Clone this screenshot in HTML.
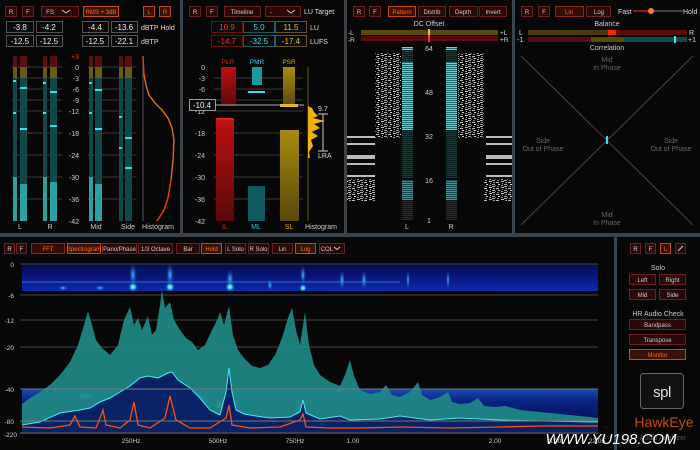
<!DOCTYPE html>
<html><head><meta charset="utf-8"><style>
html,body{margin:0;padding:0;background:#070708;width:700px;height:450px;overflow:hidden}
svg{display:block;font-family:"Liberation Sans",sans-serif}
</style></head><body>
<svg width="700" height="450" viewBox="0 0 700 450" xmlns="http://www.w3.org/2000/svg">
<defs>
<pattern id="stripe" width="4" height="2" patternUnits="userSpaceOnUse"><rect width="4" height="1" fill="#000" opacity="0.55"/></pattern>
<pattern id="noise" width="12" height="6" patternUnits="userSpaceOnUse">
<rect x="0" y="0" width="3" height="1" fill="#ddd"/><rect x="5" y="0" width="2" height="1" fill="#aaa"/><rect x="9" y="1" width="3" height="1" fill="#eee"/>
<rect x="1" y="2" width="2" height="1" fill="#bbb"/><rect x="4" y="2" width="3" height="1" fill="#eee"/><rect x="10" y="3" width="1" height="1" fill="#ccc"/>
<rect x="0" y="4" width="3" height="1" fill="#ccc"/><rect x="6" y="4" width="2" height="1" fill="#fff"/><rect x="9" y="5" width="2" height="1" fill="#bbb"/><rect x="3" y="5" width="1" height="1" fill="#999"/>
</pattern>
<linearGradient id="spec" x1="0" y1="0" x2="0" y2="1"><stop offset="0" stop-color="#050a4a"/><stop offset="0.6" stop-color="#0a1a8a"/><stop offset="1" stop-color="#0a2ab0"/></linearGradient>
<linearGradient id="spec2" x1="0" y1="0" x2="0" y2="1"><stop offset="0" stop-color="#1a4ab0"/><stop offset="0.3" stop-color="#0a2080"/><stop offset="1" stop-color="#040a40"/></linearGradient>
<radialGradient id="hot"><stop offset="0" stop-color="#d0ff40"/><stop offset="0.4" stop-color="#30d0ff"/><stop offset="1" stop-color="#1040c0" stop-opacity="0"/></radialGradient>
<radialGradient id="warm"><stop offset="0" stop-color="#40c0ff"/><stop offset="1" stop-color="#1040c0" stop-opacity="0"/></radialGradient>
<linearGradient id="redg" x1="0" y1="0" x2="0" y2="1"><stop offset="0" stop-color="#c01010"/><stop offset="1" stop-color="#5a0808"/></linearGradient>
<linearGradient id="goldg" x1="0" y1="0" x2="0" y2="1"><stop offset="0" stop-color="#a88a10"/><stop offset="1" stop-color="#5a4808"/></linearGradient>
</defs>
<style>
.b{fill:#2a0808;stroke:#6a2020;stroke-width:1}
.bo{fill:#3a1205;stroke:#c04a10;stroke-width:1}
.t{fill:#ccc;font-size:7px;text-anchor:middle}
.to{fill:#ff6a20;font-size:7px;text-anchor:middle}
.sm .t,.sm .to{font-size:6px}
.l{fill:#ddd;font-size:7px}
.s{fill:#ccc;font-size:7px;text-anchor:end}
.v{fill:#0a0a0a;stroke:#555;stroke-width:1}
.vt{fill:#eee;font-size:8px;text-anchor:middle}
.g{stroke:#3a3a3a;stroke-width:1}
.dv{fill:#37444e}
.ph{fill:#666;font-size:7px;text-anchor:middle}
</style>

<rect class="dv" x="180" y="0" width="3" height="233"/>
<rect class="dv" x="344" y="0" width="3" height="233"/>
<rect class="dv" x="512" y="0" width="3" height="233"/>
<rect class="dv" x="0" y="233" width="700" height="4"/>
<rect class="dv" x="614" y="237" width="3" height="213"/>

<!-- Panel 1 -->
<g class="sm">
<rect class="b" x="5.5" y="6.5" width="11" height="10"/><text class="t" x="11" y="14">R</text>
<rect class="b" x="22.5" y="6.5" width="11" height="10"/><text class="t" x="28" y="14">F</text>
<rect class="b" x="41.5" y="6.5" width="37" height="10"/><text class="t" x="50" y="14">FS</text><path d="M62 10l4 3 4-3" stroke="#ccc" fill="none"/>
<rect class="bo" x="83.5" y="6.5" width="35" height="10"/><text class="to" x="101" y="14">RMS + 3dB</text>
<rect class="bo" x="143.5" y="6.5" width="11" height="10"/><text class="to" x="149" y="14">L</text>
<rect class="bo" x="159.5" y="6.5" width="11" height="10"/><text class="to" x="165" y="14">R</text>
</g>
<rect class="v" x="6.5" y="21.5" width="27" height="11"/><text class="vt" x="20" y="30">-3.8</text>
<rect class="v" x="36.5" y="21.5" width="26" height="11"/><text class="vt" x="49" y="30">-4.2</text>
<rect class="v" x="82.5" y="21.5" width="26" height="11"/><text class="vt" x="95" y="30">-4.4</text>
<rect class="v" x="111.5" y="21.5" width="26" height="11"/><text class="vt" x="124" y="30">-13.6</text>
<text class="l" x="141" y="30">dBTP Hold</text>
<rect class="v" x="6.5" y="35.5" width="27" height="11"/><text class="vt" x="20" y="44">-12.5</text>
<rect class="v" x="36.5" y="35.5" width="26" height="11"/><text class="vt" x="49" y="44">-12.5</text>
<rect class="v" x="82.5" y="35.5" width="26" height="11"/><text class="vt" x="95" y="44">-12.5</text>
<rect class="v" x="111.5" y="35.5" width="26" height="11"/><text class="vt" x="124" y="44">-22.1</text>
<text class="l" x="141" y="44">dBTP</text>
<g class="g">
<line x1="12" y1="67" x2="62" y2="67"/><line x1="12" y1="78" x2="62" y2="78"/><line x1="12" y1="89" x2="62" y2="89"/><line x1="12" y1="100" x2="62" y2="100"/><line x1="12" y1="111" x2="62" y2="111"/><line x1="12" y1="133" x2="62" y2="133"/><line x1="12" y1="155" x2="62" y2="155"/><line x1="12" y1="177" x2="62" y2="177"/><line x1="12" y1="199" x2="62" y2="199"/>
<line x1="88" y1="67" x2="136" y2="67"/><line x1="88" y1="78" x2="136" y2="78"/><line x1="88" y1="89" x2="136" y2="89"/><line x1="88" y1="100" x2="136" y2="100"/><line x1="88" y1="111" x2="136" y2="111"/><line x1="88" y1="133" x2="136" y2="133"/><line x1="88" y1="155" x2="136" y2="155"/><line x1="88" y1="177" x2="136" y2="177"/><line x1="88" y1="199" x2="136" y2="199"/>
</g>
<g>
<rect x="13" y="56" width="4" height="11" fill="#5a1010"/><rect x="13" y="67" width="4" height="11" fill="#6a5a10"/><rect x="13" y="78" width="4" height="99" fill="#0e4848"/><rect x="13" y="177" width="4" height="44" fill="#2aa0a0"/>
<rect x="20" y="56" width="7" height="11" fill="#5a1010"/><rect x="20" y="67" width="7" height="11" fill="#6a5a10"/><rect x="20" y="78" width="7" height="106" fill="#0e4848"/><rect x="20" y="184" width="7" height="37" fill="#2aa0a0"/>
<rect x="43" y="56" width="4" height="11" fill="#5a1010"/><rect x="43" y="67" width="4" height="11" fill="#6a5a10"/><rect x="43" y="78" width="4" height="99" fill="#0e4848"/><rect x="43" y="177" width="4" height="44" fill="#2aa0a0"/>
<rect x="50" y="56" width="7" height="11" fill="#5a1010"/><rect x="50" y="67" width="7" height="11" fill="#6a5a10"/><rect x="50" y="78" width="7" height="104" fill="#0e4848"/><rect x="50" y="182" width="7" height="39" fill="#2aa0a0"/>
<rect x="89" y="56" width="4" height="11" fill="#5a1010"/><rect x="89" y="67" width="4" height="11" fill="#6a5a10"/><rect x="89" y="78" width="4" height="99" fill="#0e4848"/><rect x="89" y="177" width="4" height="44" fill="#2aa0a0"/>
<rect x="95" y="56" width="7" height="11" fill="#5a1010"/><rect x="95" y="67" width="7" height="11" fill="#6a5a10"/><rect x="95" y="78" width="7" height="106" fill="#0e4848"/><rect x="95" y="184" width="7" height="37" fill="#2aa0a0"/>
<rect x="119" y="56" width="4" height="11" fill="#5a1010"/><rect x="119" y="67" width="4" height="11" fill="#6a5a10"/><rect x="119" y="78" width="4" height="143" fill="#0e4848"/>
<rect x="125" y="56" width="7" height="11" fill="#5a1010"/><rect x="125" y="67" width="7" height="11" fill="#6a5a10"/><rect x="125" y="78" width="7" height="143" fill="#0e4848"/>
</g>
<g fill="#30e0f0">
<rect x="13" y="80" width="3" height="2"/><rect x="20" y="87" width="7" height="2"/><rect x="20" y="128" width="7" height="2"/><rect x="13" y="112" width="3" height="2"/>
<rect x="43" y="82" width="3" height="2"/><rect x="50" y="91" width="7" height="2"/><rect x="50" y="125" width="7" height="2"/><rect x="43" y="112" width="3" height="2"/>
<rect x="89" y="82" width="3" height="2"/><rect x="95" y="89" width="7" height="2"/><rect x="95" y="128" width="7" height="2"/><rect x="89" y="112" width="3" height="2"/>
<rect x="119" y="116" width="3" height="2"/><rect x="125" y="137" width="7" height="2"/><rect x="125" y="167" width="7" height="2"/><rect x="119" y="147" width="3" height="2"/>
</g>
<g class="s">
<text x="79" y="59" fill="#e03020" style="fill:#e03020">+3</text><text x="79" y="70">0</text><text x="79" y="81">-3</text><text x="79" y="92">-6</text><text x="79" y="103">-9</text><text x="79" y="114">-12</text><text x="79" y="136">-18</text><text x="79" y="158">-24</text><text x="79" y="180">-30</text><text x="79" y="202">-36</text><text x="79" y="224">-42</text>
</g>
<line x1="143" y1="56" x2="143" y2="221" stroke="#555"/>
<path d="M143 56 L144 75 L146 85 L149 95 L155 103 L162 110 L168 118 L172 128 L174 140 L173 160 L171 180 L168 198 L164 210 L157 221" stroke="#e04010" stroke-width="1.5" fill="none"/>
<path d="M144 75 L146 85 L149 95 L155 103 L162 110 L168 118 L172 128 L174 140 L173 160 L171 180" stroke="#c0a010" stroke-width="0.6" fill="none"/>
<text class="t" x="20" y="229">L</text><text class="t" x="50" y="229">R</text><text class="t" x="96" y="229">Mid</text><text class="t" x="128" y="229">Side</text><text class="t" x="158" y="229">Histogram</text>

<!-- Panel 2 -->
<g class="sm">
<rect class="b" x="189.5" y="6.5" width="11" height="10"/><text class="t" x="195" y="14">R</text>
<rect class="b" x="206.5" y="6.5" width="11" height="10"/><text class="t" x="212" y="14">F</text>
<rect class="b" x="224.5" y="6.5" width="36" height="10"/><text class="t" x="242" y="14">Timeline</text>
<rect class="b" x="265.5" y="6.5" width="35" height="10"/><text class="t" x="271" y="14">-</text><path d="M287 10l4 3 4-3" stroke="#ccc" fill="none"/>
</g>
<text class="l" x="304" y="14">LU Target</text>
<rect x="211.5" y="21.5" width="31" height="11" fill="#0a0a0a" stroke="#6a1010"/><text class="vt" x="227" y="30" style="fill:#ff2a2a">10.9</text>
<rect x="243.5" y="21.5" width="31" height="11" fill="#0a0a0a" stroke="#106060"/><text class="vt" x="259" y="30" style="fill:#30e0f0">5.0</text>
<rect x="275.5" y="21.5" width="31" height="11" fill="#0a0a0a" stroke="#6a5510"/><text class="vt" x="291" y="30" style="fill:#f0c010">11.5</text>
<text class="l" x="310" y="30">LU</text>
<rect x="211.5" y="35.5" width="31" height="11" fill="#0a0a0a" stroke="#6a1010"/><text class="vt" x="227" y="44" style="fill:#ff2a2a">-14.7</text>
<rect x="243.5" y="35.5" width="31" height="11" fill="#0a0a0a" stroke="#106060"/><text class="vt" x="259" y="44" style="fill:#30e0f0">-32.5</text>
<rect x="275.5" y="35.5" width="31" height="11" fill="#0a0a0a" stroke="#6a5510"/><text class="vt" x="291" y="44" style="fill:#f0c010">-17.4</text>
<text class="l" x="310" y="44">LUFS</text>
<g class="g"><line x1="214" y1="78" x2="303" y2="78"/><line x1="214" y1="89" x2="303" y2="89"/><line x1="214" y1="100" x2="303" y2="100"/><line x1="214" y1="111" x2="303" y2="111"/><line x1="214" y1="133" x2="303" y2="133"/><line x1="214" y1="155" x2="303" y2="155"/><line x1="214" y1="177" x2="303" y2="177"/><line x1="214" y1="199" x2="303" y2="199"/></g>
<g class="s"><text x="205" y="70">0</text><text x="205" y="81">-3</text><text x="205" y="92">-6</text><text x="205" y="114">-12</text><text x="205" y="136">-18</text><text x="205" y="158">-24</text><text x="205" y="180">-30</text><text x="205" y="202">-36</text><text x="205" y="224">-42</text></g>
<text x="228" y="64" style="fill:#e02010;font-size:6.5px;text-anchor:middle">PLR</text>
<text x="257" y="64" style="fill:#30d0e0;font-size:6.5px;text-anchor:middle">PMR</text>
<text x="289" y="64" style="fill:#e0b010;font-size:6.5px;text-anchor:middle">PSR</text>
<rect x="221" y="67" width="15" height="39" fill="url(#redg)"/>
<rect x="252" y="67" width="10" height="18" fill="#1a9aa0"/>
<rect x="248" y="91" width="17" height="2" fill="#30e0f0"/>
<rect x="283" y="67" width="12" height="39" fill="url(#goldg)"/>
<rect x="280" y="104" width="18" height="3" fill="#f0c010"/>
<line x1="215" y1="105" x2="304" y2="105" stroke="#aaa"/>
<rect x="189.5" y="99.5" width="26" height="11" fill="#0a0a0a" stroke="#999"/><text class="vt" x="202" y="108">-10.4</text>
<rect x="216" y="118" width="18" height="103" fill="url(#redg)"/><rect x="216" y="118" width="18" height="2" fill="#e02020"/>
<rect x="248" y="186" width="17" height="35" fill="#0f5a60"/>
<rect x="280" y="130" width="19" height="91" fill="url(#goldg)"/>
<text x="225" y="229" style="fill:#e02010;font-size:7px;text-anchor:middle">IL</text>
<text x="256" y="229" style="fill:#30d0e0;font-size:7px;text-anchor:middle">ML</text>
<text x="289" y="229" style="fill:#e0b010;font-size:7px;text-anchor:middle">SL</text>
<line x1="308" y1="67" x2="308" y2="221" stroke="#6a5510"/>
<path d="M308 106 L312 108 L314 112 L318 116 L313 118 L325 121 L314 124 L320 128 L312 132 L318 136 L311 140 L313 146 L309 152 L310 158 L308 158 Z" fill="#f0b010"/>
<path d="M318 114h10M323 114v37M318 151h10" stroke="#ccc" fill="none"/>
<text class="l" x="318" y="111">9.7</text><text class="l" x="318" y="158">LRA</text>
<text class="t" x="321" y="229">Histogram</text>

<!-- Panel 3 -->
<g class="sm">
<rect class="b" x="353.5" y="6.5" width="11" height="10"/><text class="t" x="359" y="14">R</text>
<rect class="b" x="369.5" y="6.5" width="11" height="10"/><text class="t" x="375" y="14">F</text>
<rect class="bo" x="388.5" y="6.5" width="27" height="10"/><text class="to" x="402" y="14">Pattern</text>
<rect class="b" x="418.5" y="6.5" width="27" height="10"/><text class="t" x="432" y="14">Distrib</text>
<rect class="b" x="449.5" y="6.5" width="28" height="10"/><text class="t" x="463" y="14">Depth</text>
<rect class="b" x="479.5" y="6.5" width="27" height="10"/><text class="t" x="493" y="14">Invert</text>
</g>
<text class="t" x="429" y="26">DC Offset</text>
<rect x="361" y="30" width="137" height="5" fill="#5a4a10"/><rect x="428" y="29" width="2" height="7" fill="#f0c040"/>
<rect x="361" y="36" width="137" height="5" fill="#5a0c0c"/><rect x="428" y="35" width="2" height="7" fill="#ff3030"/>
<text class="l" x="348" y="35" style="font-size:6.5px">-L</text><text class="l" x="500" y="35" style="font-size:6.5px">+L</text>
<text class="l" x="348" y="42" style="font-size:6.5px">-R</text><text class="l" x="500" y="42" style="font-size:6.5px">+R</text>
<g opacity="0.8">
<rect x="375" y="53" width="26" height="85" fill="url(#noise)"/>
<rect x="458" y="53" width="26" height="85" fill="url(#noise)"/>
<rect x="347" y="179" width="28" height="22" fill="url(#noise)"/><rect x="484" y="179" width="28" height="22" fill="url(#noise)"/>
</g>
<g fill="#bbb">
<rect x="347" y="136" width="28" height="2"/><rect x="347" y="143" width="28" height="2"/><rect x="347" y="155" width="28" height="4"/><rect x="347" y="163" width="28" height="2"/><rect x="347" y="175" width="28" height="2"/>
<rect x="486" y="136" width="26" height="2"/><rect x="486" y="143" width="26" height="2"/><rect x="486" y="155" width="26" height="4"/><rect x="486" y="163" width="26" height="2"/><rect x="486" y="175" width="26" height="2"/>
</g>
<g>
<rect x="402" y="47" width="11" height="3" fill="#30f0f0"/>
<rect x="402" y="50" width="11" height="12" fill="#1a3a3a"/><rect x="402" y="62" width="11" height="68" fill="#30e8f0"/><rect x="402" y="130" width="11" height="48" fill="#0e4040"/><rect x="402" y="180" width="11" height="20" fill="#20a0a8"/><rect x="402" y="200" width="11" height="20" fill="#2a2a2a"/>
<rect x="402" y="47" width="11" height="173" fill="url(#stripe)"/>
<rect x="446" y="47" width="11" height="3" fill="#30f0f0"/>
<rect x="446" y="50" width="11" height="12" fill="#1a3a3a"/><rect x="446" y="62" width="11" height="68" fill="#30e8f0"/><rect x="446" y="130" width="11" height="48" fill="#0e4040"/><rect x="446" y="180" width="11" height="20" fill="#20a0a8"/><rect x="446" y="200" width="11" height="20" fill="#2a2a2a"/>
<rect x="446" y="47" width="11" height="173" fill="url(#stripe)"/>
</g>
<g class="t"><text x="429" y="51">64</text><text x="429" y="95">48</text><text x="429" y="139">32</text><text x="429" y="183">16</text><text x="429" y="223">1</text><text x="407" y="229">L</text><text x="451" y="229">R</text></g>

<!-- Panel 4 -->
<g class="sm">
<rect class="b" x="521.5" y="6.5" width="11" height="10"/><text class="t" x="527" y="14">R</text>
<rect class="b" x="538.5" y="6.5" width="11" height="10"/><text class="t" x="544" y="14">F</text>
<rect class="bo" x="555.5" y="6.5" width="28" height="10" style="fill:#3a0a05;stroke:#8a2a10"/><text class="to" x="569" y="14">Lin</text>
<rect class="b" x="586.5" y="6.5" width="24" height="10"/><text class="t" x="599" y="14">Log</text>
</g>
<text class="l" x="618" y="14">Fast</text>
<rect x="633" y="10" width="20" height="2" fill="#8a1a10"/><rect x="653" y="10" width="30" height="2" fill="#444"/><circle cx="651" cy="11" r="3" fill="#ff8020"/>
<text class="l" x="683" y="14">Hold</text>
<text class="t" x="607" y="26">Balance</text>
<rect x="528" y="30" width="80" height="5" fill="#4a3a08"/><rect x="608" y="30" width="79" height="5" fill="#5a0c0c"/><rect x="608" y="30" width="8" height="5" fill="#ff2010"/>
<rect x="528" y="37" width="63" height="5" fill="#5a0c0c"/><rect x="591" y="37" width="33" height="5" fill="#5a4a08"/><rect x="624" y="37" width="63" height="5" fill="#0e4a4a"/><rect x="674" y="36" width="2" height="7" fill="#30f0f0"/>
<text class="l" x="519" y="35">L</text><text class="l" x="689" y="35">R</text><text class="l" x="517" y="42">-1</text><text class="l" x="688" y="42">+1</text>
<text class="t" x="607" y="50">Correlation</text>
<line x1="521" y1="56" x2="693" y2="225" stroke="#444"/><line x1="693" y1="56" x2="521" y2="225" stroke="#444"/>
<rect x="606" y="136" width="2" height="8" fill="#30e0f0"/>
<text class="ph" x="607" y="62">Mid</text><text class="ph" x="607" y="70">In Phase</text>
<text class="ph" x="543" y="143">Side</text><text class="ph" x="543" y="151">Out of Phase</text>
<text class="ph" x="671" y="143">Side</text><text class="ph" x="671" y="151">Out of Phase</text>
<text class="ph" x="607" y="217">Mid</text><text class="ph" x="607" y="225">In Phase</text>

<!-- Bottom -->
<g class="sm">
<rect class="b" x="4.5" y="243.5" width="10" height="10"/><text class="t" x="9.5" y="251">R</text>
<rect class="b" x="16.5" y="243.5" width="10" height="10"/><text class="t" x="21.5" y="251">F</text>
<rect class="bo" x="31.5" y="243.5" width="33" height="10" style="fill:#3a0a05;stroke:#8a2a10"/><text class="to" x="48" y="251">FFT</text>
<rect class="bo" x="67.5" y="243.5" width="33" height="10"/><text class="to" x="84" y="251">Spectrogram</text>
<rect class="b" x="102.5" y="243.5" width="34" height="10"/><text class="t" x="119.5" y="251">Pano/Phase</text>
<rect class="b" x="138.5" y="243.5" width="34" height="10"/><text class="t" x="155.5" y="251">1/3 Octave</text>
<rect class="b" x="176.5" y="243.5" width="23" height="10"/><text class="t" x="188" y="251">Bar</text>
<rect class="bo" x="201.5" y="243.5" width="20" height="10"/><text class="to" x="211.5" y="251">Hold</text>
<rect class="b" x="225.5" y="243.5" width="20" height="10"/><text class="t" x="235.5" y="251">L Solo</text>
<rect class="b" x="248.5" y="243.5" width="20" height="10"/><text class="t" x="258.5" y="251">R Solo</text>
<rect class="b" x="272.5" y="243.5" width="20" height="10"/><text class="t" x="282.5" y="251">Lin</text>
<rect class="bo" x="295.5" y="243.5" width="20" height="10"/><text class="to" x="305.5" y="251">Log</text>
<rect class="b" x="319.5" y="243.5" width="25" height="10"/><text class="t" x="327" y="251">COL</text><path d="M334 247l3 2.5 3-2.5" stroke="#ccc" fill="none"/>
</g>
<g class="s" style="font-size:6.5px"><text x="14" y="267">0</text><text x="14" y="298">-6</text><text x="14" y="323">-12</text><text x="14" y="350">-20</text><text x="14" y="392">-40</text><text x="14" y="424">-80</text><text x="17" y="437">-220</text></g>
<rect x="22" y="264" width="576" height="27" fill="url(#spec)"/>
<g>
<ellipse cx="133" cy="275" rx="4" ry="12" fill="url(#warm)"/><ellipse cx="170" cy="275" rx="4" ry="12" fill="url(#warm)"/><ellipse cx="230" cy="279" rx="4" ry="10" fill="url(#warm)"/>
<ellipse cx="133" cy="287" rx="5" ry="5" fill="url(#hot)"/><ellipse cx="170" cy="287" rx="5" ry="5" fill="url(#hot)"/><ellipse cx="230" cy="287" rx="5" ry="5" fill="url(#hot)"/>
<ellipse cx="100" cy="288" rx="6" ry="3" fill="url(#warm)"/><ellipse cx="63" cy="288" rx="5" ry="3" fill="url(#warm)"/><ellipse cx="303" cy="288" rx="4" ry="4" fill="url(#hot)"/><ellipse cx="303" cy="275" rx="3" ry="10" fill="url(#warm)"/>
<ellipse cx="270" cy="285" rx="3" ry="6" fill="url(#warm)"/><ellipse cx="342" cy="280" rx="3" ry="10" fill="url(#warm)"/><ellipse cx="364" cy="280" rx="3" ry="10" fill="url(#warm)"/><ellipse cx="408" cy="280" rx="2" ry="10" fill="url(#warm)"/><ellipse cx="448" cy="280" rx="2" ry="10" fill="url(#warm)"/>
</g>
<line x1="22" y1="282" x2="400" y2="282" stroke="#5080e0" stroke-width="0.7"/>
<g stroke="#444" stroke-width="1"><line x1="20" y1="264" x2="598" y2="264"/><line x1="20" y1="295" x2="598" y2="295"/><line x1="20" y1="320" x2="598" y2="320"/><line x1="20" y1="347" x2="598" y2="347"/></g>
<rect x="22" y="389" width="576" height="44" fill="url(#spec2)"/>
<g>
<ellipse cx="85" cy="396" rx="10" ry="4" fill="url(#hot)"/><ellipse cx="135" cy="398" rx="10" ry="5" fill="url(#hot)"/><ellipse cx="155" cy="402" rx="8" ry="5" fill="url(#hot)"/><ellipse cx="200" cy="398" rx="12" ry="5" fill="url(#warm)"/><ellipse cx="220" cy="405" rx="6" ry="6" fill="url(#hot)"/><ellipse cx="170" cy="420" rx="4" ry="12" fill="url(#warm)"/><ellipse cx="300" cy="410" rx="8" ry="10" fill="url(#warm)"/>
</g>
<path d="M22 432 L22 404 L30 398 L40 392 L50 385 L60 375 L70 362 L78 345 L84 325 L88 311 L92 325 L96 340 L102 348 L110 355 L118 345 L124 320 L130 307 L134 325 L138 318 L142 330 L148 316 L152 335 L156 330 L160 305 L162 290 L165 308 L170 302 L174 320 L180 330 L186 338 L192 342 L198 350 L205 345 L212 330 L218 318 L220 312 L224 325 L229 306 L233 335 L238 350 L244 358 L252 366 L260 368 L268 365 L275 355 L282 338 L288 318 L292 308 L296 330 L300 345 L305 312 L309 345 L314 365 L320 375 L330 382 L340 386 L345 375 L350 360 L354 376 L360 390 L370 394 L380 392 L386 385 L392 395 L400 397 L410 392 L418 382 L422 395 L430 400 L440 397 L448 392 L452 402 L460 404 L470 403 L478 398 L484 406 L495 407 L505 406 L520 410 L540 412 L560 414 L580 416 L598 418 L598 432 Z" fill="#1f8a86" opacity="0.92"/>
<path d="M22 425 L40 422 L60 413 L80 410 L90 408 L100 402 L110 398 L120 392 L130 386 L140 378 L148 376 L158 378 L168 373 L172 372 L178 380 L190 388 L200 398 L210 410 L220 415 L226 392 L229 368 L232 392 L236 410 L244 414 L256 416 L270 418 L290 417 L300 412 L303 400 L306 413 L320 419 L340 416 L350 420 L380 419 L400 416 L430 420 L460 418 L500 420 L540 421 L598 422 L598 432 L22 432 Z" fill="#061060" opacity="0.85"/>
<path d="M22 425 L40 422 L60 413 L80 410 L90 408 L100 402 L110 398 L120 392 L130 386 L140 378 L148 376 L158 378 L168 373 L172 372 L178 380 L190 388 L200 398 L210 410 L220 415 L226 392 L229 368 L232 392 L236 410 L244 414 L256 416 L270 418 L290 417 L300 412 L303 400 L306 413 L320 419 L340 416 L350 420 L380 419 L400 416 L430 420 L460 418 L500 420 L540 421 L598 422" stroke="#40f0f0" stroke-width="1" fill="none"/>
<path d="M22 427 L50 428 L70 425 L75 416 L80 427 L96 428 L100 418 L103 410 L106 425 L120 428 L130 420 L134 402 L138 425 L150 428 L165 418 L170 396 L176 420 L190 428 L210 428 L226 418 L229 405 L232 425 L250 428 L280 427 L300 420 L303 414 L306 427 L330 428 L360 428 L400 427 L450 428 L500 427 L540 426 L598 426" stroke="#ff5010" stroke-width="1.3" fill="none"/>
<g stroke="#777" stroke-width="1"><line x1="20" y1="389" x2="598" y2="389"/><line x1="20" y1="421" x2="598" y2="421"/><line x1="20" y1="433" x2="598" y2="433"/></g>
<g class="t" style="font-size:6.5px"><text x="131" y="443">250Hz</text><text x="218" y="443">500Hz</text><text x="295" y="443">750Hz</text><text x="353" y="443">1.00</text><text x="495" y="443">2.00</text><text x="555" y="443">3.00</text><text x="597" y="443">22.05</text></g>
<g class="sm">
<rect class="b" x="630.5" y="243.5" width="10" height="10"/><text class="t" x="635.5" y="251">R</text>
<rect class="b" x="645.5" y="243.5" width="10" height="10"/><text class="t" x="650.5" y="251">F</text>
<rect class="bo" x="660.5" y="243.5" width="10" height="10"/><text class="to" x="665.5" y="251">L</text>
<rect class="b" x="675.5" y="243.5" width="10" height="10"/><path d="M678 251l5-5" stroke="#ccc"/>
<rect class="b" x="629.5" y="274.5" width="26" height="10"/><text class="t" x="642.5" y="282">Left</text>
<rect class="b" x="659.5" y="274.5" width="26" height="10"/><text class="t" x="672.5" y="282">Right</text>
<rect class="b" x="629.5" y="289.5" width="26" height="10"/><text class="t" x="642.5" y="297">Mid</text>
<rect class="b" x="659.5" y="289.5" width="26" height="10"/><text class="t" x="672.5" y="297">Side</text>
<rect class="b" x="629.5" y="319.5" width="56" height="10"/><text class="t" x="657.5" y="327">Bandpass</text>
<rect class="b" x="629.5" y="334.5" width="56" height="10"/><text class="t" x="657.5" y="342">Transpose</text>
<rect class="bo" x="629.5" y="349.5" width="56" height="10"/><text class="to" x="657.5" y="357">Monitor</text>
</g>
<text class="t" x="658" y="270">Solo</text>
<text class="t" x="658" y="316">HR Audio Check</text>
<rect x="640.5" y="373.5" width="43" height="35" rx="3" fill="#111" stroke="#666"/>
<text x="662" y="397" style="fill:#ddd;font-size:15px;text-anchor:middle;letter-spacing:-0.5px">spl</text>
<text x="664" y="427" style="fill:#ff6010;font-size:14px;text-anchor:middle;opacity:0.75">HawkEye</text>
<text x="663" y="440" style="fill:#555;font-size:7px;text-anchor:middle">Audio Analyzer</text>
<text x="611" y="444" style="fill:#fff;font-size:15px;text-anchor:middle;font-style:italic">WWW.YU198.COM</text>
</svg>
</body></html>
